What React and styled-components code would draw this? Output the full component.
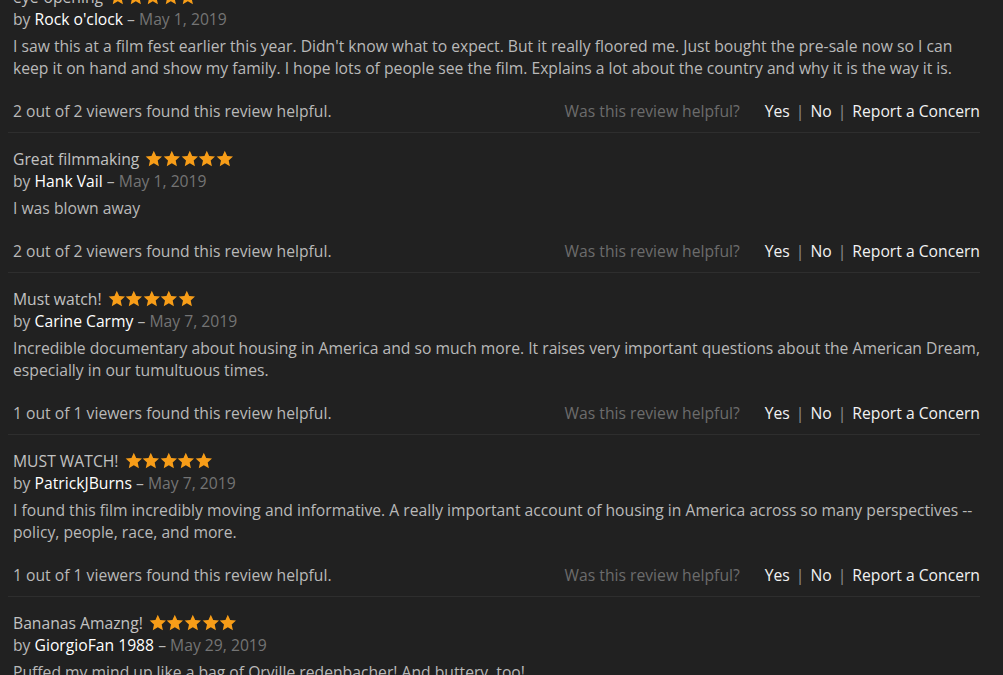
import React from 'react';
import styled, { createGlobalStyle } from 'styled-components';

const GlobalStyle = createGlobalStyle`
  html, body {
    margin: 0;
    padding: 0;
    background: #212121;
    overflow: hidden;
  }
  body {
    font-family: "Open Sans", "Noto Sans", sans-serif;
  }
`;

const reviews = [
  {
    title: 'eye-opening',
    author: "Rock o'clock",
    date: 'May 1, 2019',
    body: "I saw this at a film fest earlier this year. Didn't know what to expect. But it really floored me. Just bought the pre-sale now so I can keep it on hand and show my family. I hope lots of people see the film. Explains a lot about the country and why it is the way it is.",
    helpful: '2 out of 2',
  },
  {
    title: 'Great filmmaking',
    author: 'Hank Vail',
    date: 'May 1, 2019',
    body: 'I was blown away',
    helpful: '2 out of 2',
  },
  {
    title: 'Must watch!',
    author: 'Carine Carmy',
    date: 'May 7, 2019',
    body: 'Incredible documentary about housing in America and so much more. It raises very important questions about the American Dream, especially in our tumultuous times.',
    helpful: '1 out of 1',
  },
  {
    title: 'MUST WATCH!',
    author: 'PatrickJBurns',
    date: 'May 7, 2019',
    body: 'I found this film incredibly moving and informative. A really important account of housing in America across so many perspectives -- policy, people, race, and more.',
    helpful: '1 out of 1',
  },
  {
    title: 'Bananas Amazng!',
    author: 'GiorgioFan 1988',
    date: 'May 29, 2019',
    body: 'Puffed my mind up like a bag of Orville redenbacher! And buttery, too!',
    helpful: '1 out of 1',
  },
];

const Star = () => (
  <svg width="17.6" height="17" viewBox="0 0 24 23" aria-hidden="true">
    <path
      d="M12 0.8l3.3 7.2 7.9 0.9-5.9 5.4 1.7 7.8L12 18.1l-6.9 4 1.7-7.8-5.9-5.4 7.9-0.9z"
      fill="#f79d18"
    />
  </svg>
);

const Review = ({ review }) => (
  <Item>
    <Title>
      {review.title}
      <Stars>
        {[0, 1, 2, 3, 4].map((i) => (
          <Star key={i} />
        ))}
      </Stars>
    </Title>
    <Byline>
      by <Author>{review.author}</Author> – <DateText>{review.date}</DateText>
    </Byline>
    <Body>{review.body}</Body>
    <Footer>
      <Helpful>{review.helpful} viewers found this review helpful.</Helpful>
      <Actions>
        <Question>Was this review helpful?</Question>
        <ActionLink href="#">Yes</ActionLink>
        <Sep>|</Sep>
        <ActionLink href="#">No</ActionLink>
        <Sep>|</Sep>
        <ActionLink href="#">Report a Concern</ActionLink>
      </Actions>
    </Footer>
  </Item>
);

export default function App() {
  return (
    <>
      <GlobalStyle />
      <Page>
        {/* page is shown scrolled part way down the list */}
        <List>
          {reviews.map((r) => (
            <Review key={r.author} review={r} />
          ))}
        </List>
      </Page>
    </>
  );
}

const Page = styled.div`
  height: 675px;
  overflow: hidden;
  padding: 0 23px 0 8px;
`;

const List = styled.div`
  margin-top: -29px;
`;

const Item = styled.div`
  padding: 15px 0 10px 5px;
  border-bottom: 1px solid #2e2e2e;
  font-size: 15.7px;
  line-height: 22px;
  color: #b9b9b9;
`;

const Title = styled.div`
  display: flex;
  align-items: center;
  gap: 6px;
  color: #c2c2c2;
`;

const Stars = styled.span`
  display: inline-flex;
  align-items: center;
  position: relative;
  top: -1px;
`;

const Byline = styled.div`
  color: #b9b9b9;
`;

const Author = styled.span`
  color: #ffffff;
`;

const DateText = styled.span`
  color: #747474;
`;

const Body = styled.p`
  margin: 5px 0 0;
  color: #b9b9b9;
`;

const Footer = styled.div`
  display: flex;
  justify-content: space-between;
  align-items: center;
  margin-top: 21px;
`;

const Helpful = styled.span`
  color: #b9b9b9;
`;

const Actions = styled.div`
  display: flex;
  align-items: center;
`;

const Question = styled.span`
  color: #6c6c6c;
  margin-right: 25px;
`;

const ActionLink = styled.a`
  color: #f2f2f2;
  text-decoration: none;
`;

const Sep = styled.span`
  color: #8f8f8f;
  margin: 0 6px;
`;
